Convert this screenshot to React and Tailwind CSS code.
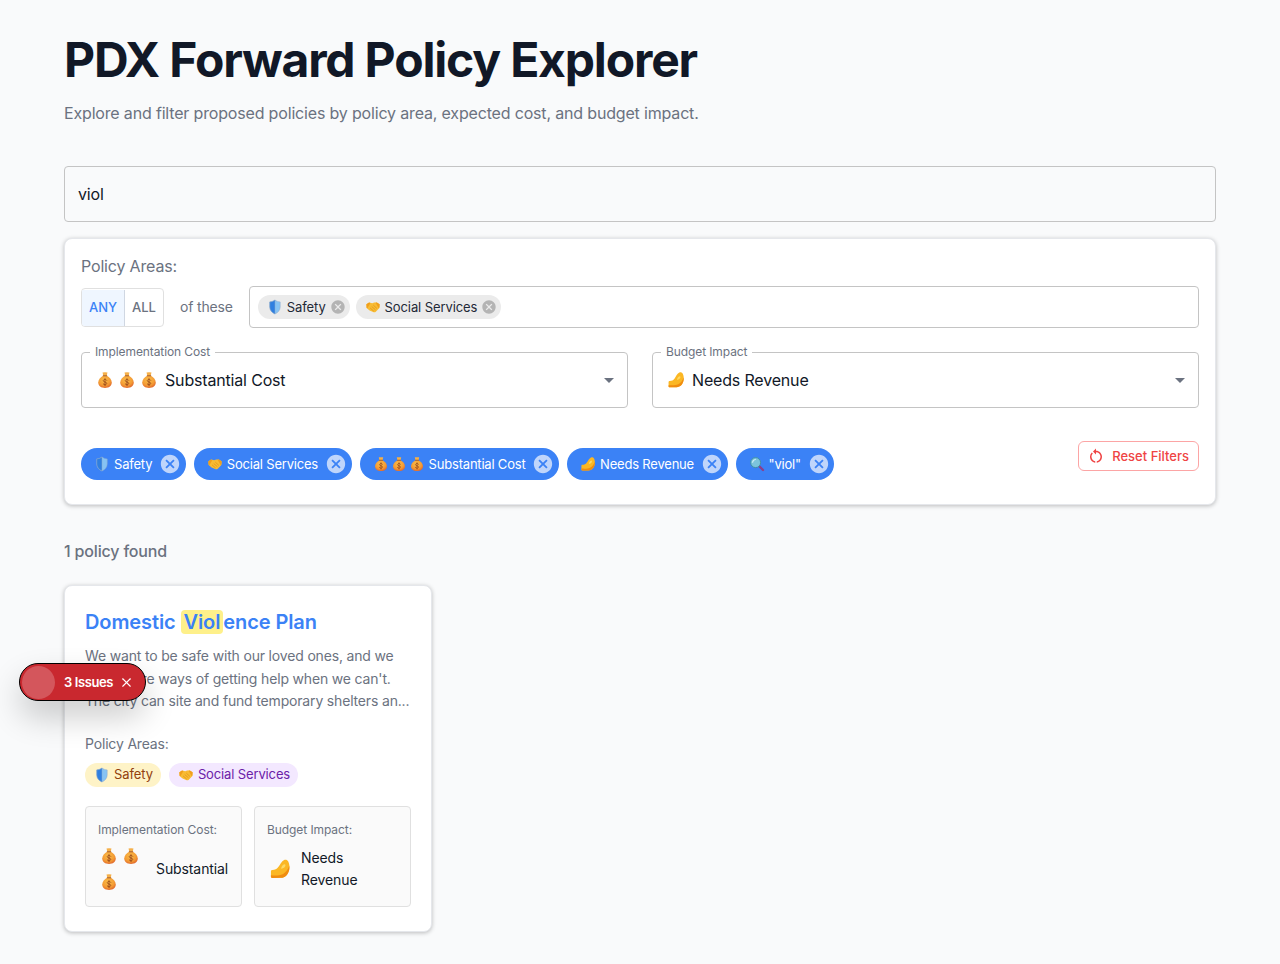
import { X } from 'lucide-react';
import { MdCancel, MdRestartAlt } from 'react-icons/md';

const Shield = ({ size = 16 }) => (
  <svg width={size} height={size} viewBox="0 0 16 16" className="shrink-0">
    <path d="M8 1C6.4 2.3 4.6 2.8 2.8 2.9V8c0 3.2 2.2 5.6 5.2 7 3-1.4 5.2-3.8 5.2-7V2.9C11.4 2.8 9.6 2.3 8 1z" fill="#86c3f4" stroke="#8fa8c8" strokeWidth=".5" />
    <path d="M8 1C6.4 2.3 4.6 2.8 2.8 2.9V8c0 3.2 2.2 5.6 5.2 7z" fill="#2f7fe0" stroke="#8fa8c8" strokeWidth=".5" />
  </svg>
);

const Handshake = ({ size = 16 }) => (
  <svg width={size} height={size} viewBox="0 0 16 16" className="shrink-0">
    <path d="M1.4 5.2 4.2 3.4l3 .8 2-.7 2.6-.1 2.8 1.8-.2 3.8-3.6 3.8c-.8.7-1.9.7-2.7.2L4.6 11.6 1.6 9z" fill="#f8bb33" />
    <path d="M1.4 5.2 4 3.5l1.4.5-3 5.2-.8-.4zM14.6 5.2l-2.8-1.8-1.2.4 3 5.2.8-.6z" fill="#f09f1c" />
    <path d="M5.4 9.2 8.4 11.8M7 7.8l3.2 2.8M8.6 6.4l3 2.8" stroke="#dc8f14" strokeWidth=".7" fill="none" strokeLinecap="round" />
  </svg>
);

const MoneyBag = ({ size = 16 }) => (
  <svg width={size} height={size} viewBox="0 0 16 16" className="shrink-0">
    <defs>
      <radialGradient id="bag" cx="0.45" cy="0.35" r="0.75">
        <stop offset="0" stopColor="#fbbf4a" />
        <stop offset="0.6" stopColor="#f39a34" />
        <stop offset="1" stopColor="#d9562a" />
      </radialGradient>
    </defs>
    <path d="M5.8 1.2c.8.4 1.5-.2 2.2.1.7-.3 1.4.3 2.2-.1L9.6 4.2H6.4z" fill="#f5b04a" />
    <path d="M6.4 4.2h3.2C12 5.6 14 7.6 14 10.2c0 3.2-2.6 4.8-6 4.8s-6-1.6-6-4.8c0-2.6 2-4.6 4.4-6z" fill="url(#bag)" />
    <rect x="6" y="3.7" width="4" height="1" rx=".5" fill="#a8602a" />
    <path d="M9.5 8.2C9.1 7.7 8.6 7.5 8 7.5c-.9 0-1.5.5-1.5 1.1 0 1.6 3 .8 3 2.4 0 .7-.7 1.2-1.5 1.2-.7 0-1.2-.3-1.6-.8M8 6.8v6.2" stroke="#9a4a1c" strokeWidth=".8" fill="none" strokeLinecap="round" />
  </svg>
);

const Pinch = ({ size = 16 }) => (
  <svg width={size} height={size} viewBox="0 0 16 16" className="shrink-0">
    <path d="M1.4 9.8c0-.6.4-1 1-1 1.9 0 3.2-.6 4.2-2C7.9 5 9.2 2.2 11 1.4c1.2-.5 2.4 0 3 1.1.9 1.7 1.1 4 .7 6-.6 3.2-2.8 5.8-6.2 5.9l-6.2.1c-.6 0-.9-.4-.9-1z" fill="#fbb724" />
    <path d="M1.4 12.6c3.4.3 6.4.2 8.6-.8 2.4-1.2 4-3.6 4.7-6.1.2 1 .2 1.9 0 2.8-.6 3.2-2.8 5.8-6.2 5.9l-6.2.1c-.6 0-.9-.4-.9-1z" fill="#f08c10" />
    <path d="M8.8 7.8c.2-1.4 1.2-3 2.4-3.2.8-.1 1 .8.5 1.6-.6 1-1.7 1.6-2.9 1.6z" fill="#fdd964" />
  </svg>
);

const Magnifier = ({ size = 16 }) => (
  <svg width={size} height={size} viewBox="0 0 16 16" className="shrink-0">
    <path d="M10 10l4 4" stroke="#8c3f8a" strokeWidth="2.4" strokeLinecap="round" />
    <circle cx="6.6" cy="6.6" r="5" fill="#7cc4dc" stroke="#3f8fa8" strokeWidth="1" />
    <path d="M3.6 6.2c.2-1.4 1.2-2.5 2.7-2.7" stroke="#d4f0f7" strokeWidth="1.2" fill="none" strokeLinecap="round" />
  </svg>
);

const Caret = () => (
  <svg width="10" height="5" viewBox="0 0 10 5" className="shrink-0">
    <path d="M0 0h10L5 5z" fill="#6b7280" />
  </svg>
);

const SelectedTag = ({ icon, label }) => (
  <span className="flex h-6 items-center rounded-full bg-[#ebebeb] pl-[9px] pr-[4px] text-[13px] tracking-[-0.1px] text-[#1f2937]">
    {icon}
    <span className="ml-1 pt-px">{label}</span>
    <MdCancel size={16} className="ml-1 text-[#b4b4b4]" />
  </span>
);

const ActiveChip = ({ icon, label }) => (
  <span className="flex h-8 items-center rounded-full bg-[#3b82f6] pl-[13px] pr-[4.6px] text-[13px] tracking-[-0.2px] text-white">
    {icon}
    <span className="ml-1 pt-px">{label}</span>
    <MdCancel size={22} className="ml-[7px] text-[#bfd5fb]" />
  </span>
);

const OutlinedSelect = ({ label, children }) => (
  <div className="relative flex h-14 flex-1 items-center justify-between rounded border border-[#c4c4c4] pl-[14px] pr-[13px]">
    <span className="absolute -top-[9px] left-[8px] bg-white px-[5px] text-xs leading-4 tracking-[-0.1px] text-[#6b7280]">{label}</span>
    <span className="flex items-center text-base text-[#111827]">{children}</span>
    <Caret />
  </div>
);

const BagRow = () => (
  <>
    <MoneyBag size={18} />
    <MoneyBag size={18} />
    <MoneyBag size={18} />
  </>
);

export default function App() {
  return (
    <div className="relative min-h-[964px] bg-[#f9fafb] px-16 pt-8 font-['Inter',sans-serif] tracking-[-0.17px]">
      <h1 className="text-5xl font-bold leading-[56px] tracking-[-1.18px] text-[#111827]">PDX Forward Policy Explorer</h1>
      <p className="mt-[13px] text-base leading-6 text-[#6b7280]">Explore and filter proposed policies by policy area, expected cost, and budget impact.</p>

      <div className="mt-[41px] flex h-14 items-center rounded border border-[#c4c4c4] px-[13px] text-base text-[#111827]">viol</div>

      <div className="mt-4 h-[267px] rounded-lg border border-[#e5e7eb] bg-white p-4 shadow-[0_1px_4px_rgba(0,0,0,0.25)]">
        <div className="mb-[9px] text-base leading-[22px] text-[#6b7280]">Policy Areas:</div>
        <div className="flex items-center">
          <div className="flex h-[39px] overflow-hidden rounded border border-[#e0e0e0] pt-px text-[13px] font-medium tracking-normal">
            <span className="flex w-[43px] items-center justify-center border-r border-[#d0d7e2] bg-[#eff6ff] text-[#3b82f6]">ANY</span>
            <span className="flex w-[38px] items-center justify-center text-[#6b7280]">ALL</span>
          </div>
          <span className="ml-4 text-sm text-[#6b7280]">of these</span>
          <div className="ml-4 flex h-[42px] flex-1 items-center gap-[6px] rounded border border-[#c4c4c4] pl-2">
            <SelectedTag icon={<Shield />} label="Safety" />
            <SelectedTag icon={<Handshake />} label="Social Services" />
          </div>
        </div>

        <div className="mt-6 flex gap-6">
          <OutlinedSelect label="Implementation Cost">
            <span className="flex gap-1">
              <BagRow />
            </span>
            <span className="ml-[7px]">Substantial Cost</span>
          </OutlinedSelect>
          <OutlinedSelect label="Budget Impact">
            <Pinch size={18} />
            <span className="ml-[7px]">Needs Revenue</span>
          </OutlinedSelect>
        </div>

        <div className="mt-[32px] flex items-start justify-between">
          <div className="mt-[8px] flex gap-2">
            <ActiveChip icon={<Shield />} label="Safety" />
            <ActiveChip icon={<Handshake />} label="Social Services" />
            <ActiveChip
              icon={
                <span className="flex gap-[2px]">
                  <MoneyBag />
                  <MoneyBag />
                  <MoneyBag />
                </span>
              }
              label="Substantial Cost"
            />
            <ActiveChip icon={<Pinch />} label="Needs Revenue" />
            <ActiveChip icon={<Magnifier />} label={'"viol"'} />
          </div>
          <button className="mt-px flex h-[30px] items-center rounded-md border border-[#fca5a5] pl-2 pr-[9px] text-[13px] font-medium tracking-normal text-[#ef4444]">
            <MdRestartAlt size={18} />
            <span className="ml-[7px] pt-px">Reset Filters</span>
          </button>
        </div>
      </div>

      <div className="mt-[34px] text-base font-medium leading-6 text-[#6b7280]">1 policy found</div>

      <div className="mt-[22px] h-[347px] w-[368px] rounded-lg border border-[#e5e7eb] bg-white px-5 pt-5 shadow-[0_1px_4px_rgba(0,0,0,0.25)]">
        <h2 className="text-xl font-semibold leading-8 tracking-[-0.1px] text-[#3b82f6]">
          Domestic <mark className="rounded-sm bg-[#fef08a] px-[3px] text-[#3b82f6]">Viol</mark>ence Plan
        </h2>
        <p className="mt-[7.3px] whitespace-nowrap text-sm leading-[22.4px] text-[#6b7280]">
          We want to be safe with our loved ones, and we
          <br />
          need more ways of getting help when we can't.
          <br />
          The city can site and fund temporary shelters an...
        </p>
        <div className="mt-[20.7px] text-sm leading-[22px] text-[#6b7280]">Policy Areas:</div>
        <div className="mt-2 flex gap-2">
          <span className="flex h-6 items-center rounded-full bg-[#fef3c7] pl-[9px] pr-2 text-[13px] tracking-[-0.1px] text-[#92400e]">
            <Shield />
            <span className="ml-1">Safety</span>
          </span>
          <span className="flex h-6 items-center rounded-full bg-[#f3e8ff] pl-[9px] pr-2 text-[13px] tracking-[-0.13px] text-[#6b21a8]">
            <Handshake />
            <span className="ml-1">Social Services</span>
          </span>
        </div>
        <div className="mt-[19px] flex gap-3">
          <div className="h-[101px] w-[157px] rounded border border-[#e0e0e0] bg-[#fafafa] px-3 pt-[14px]">
            <div className="text-xs leading-[18px] tracking-[-0.08px] text-[#6b7280]">Implementation Cost:</div>
            <div className="mt-2 flex items-center">
              <div className="flex w-[50px] flex-wrap gap-x-1 gap-y-2 pl-[2px]">
                <BagRow />
              </div>
              <span className="ml-2 text-sm tracking-[-0.1px] text-[#111827]">Substantial</span>
            </div>
          </div>
          <div className="h-[101px] w-[157px] rounded border border-[#e0e0e0] bg-[#fafafa] px-3 pt-[14px]">
            <div className="text-xs leading-[18px] tracking-[-0.08px] text-[#6b7280]">Budget Impact:</div>
            <div className="mt-2 flex items-center pl-[2px]">
              <Pinch size={22} />
              <span className="ml-[10px] text-sm leading-[22px] tracking-[-0.1px] text-[#111827]">
                Needs
                <br />
                Revenue
              </span>
            </div>
          </div>
        </div>
      </div>

      {/* dev tools badge, sits over the card */}
      <div className="absolute left-[19px] top-[663px] flex h-[38px] w-[127px] items-center rounded-full border border-black bg-[#c9282f] pl-[2px] shadow-[0_16px_32px_rgba(0,0,0,0.2)]">
        <span className="h-[33px] w-[33px] rounded-full bg-[#d4565c]" />
        <span className="ml-[9px] pt-px text-[13px] font-semibold tracking-[-0.4px] text-white">3 Issues</span>
        <X size={15} strokeWidth={1.8} className="ml-[6px] text-white" />
      </div>
    </div>
  );
}
